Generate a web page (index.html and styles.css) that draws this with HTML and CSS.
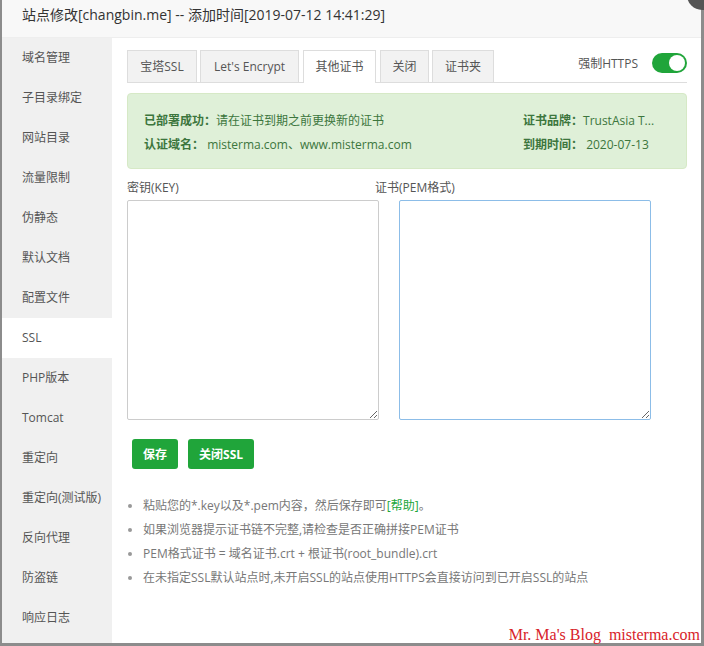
FILE: index.html
```html
<!DOCTYPE html>
<html>
<head>
<meta charset="utf-8">
<link rel="stylesheet" href="styles.css">
</head>
<body>
<div class="frame">
  <div class="dialog">
    <div class="title">站点修改[changbin.me] -- 添加时间[2019-07-12 14:41:29]</div>
    <span class="close"></span>
    <div class="body">
      <ul class="side">
        <li>域名管理</li>
        <li>子目录绑定</li>
        <li>网站目录</li>
        <li>流量限制</li>
        <li>伪静态</li>
        <li>默认文档</li>
        <li>配置文件</li>
        <li class="on">SSL</li>
        <li>PHP版本</li>
        <li>Tomcat</li>
        <li>重定向</li>
        <li>重定向(测试版)</li>
        <li>反向代理</li>
        <li>防盗链</li>
        <li>响应日志</li>
      </ul>
      <div class="main">
        <div class="tabbar">
          <span class="tab t1">宝塔SSL</span>
          <span class="tab t2">Let's Encrypt</span>
          <span class="tab t3 active">其他证书</span>
          <span class="tab t4">关闭</span>
          <span class="tab t5">证书夹</span>
          <div class="force">
            <span>强制HTTPS</span>
            <span class="switch"><span class="knob"></span></span>
          </div>
        </div>
        <div class="alert">
          <div class="col left">
            <p><b>已部署成功：</b>请在证书到期之前更换新的证书</p>
            <p><b>认证域名：</b> misterma.com、www.misterma.com</p>
          </div>
          <div class="col right">
            <p><b>证书品牌：</b>TrustAsia T...</p>
            <p><b>到期时间：</b> 2020-07-13</p>
          </div>
        </div>
        <div class="fields">
          <div class="field f1">
            <label>密钥(KEY)</label>
            <textarea></textarea>
          </div>
          <div class="field f2">
            <label>证书(PEM格式)</label>
            <textarea class="focus"></textarea>
          </div>
        </div>
        <div class="btns">
          <button class="btn">保存</button>
          <button class="btn">关闭SSL</button>
        </div>
        <ul class="tips">
          <li>粘贴您的*.key以及*.pem内容，然后保存即可<a>[帮助]</a>。</li>
          <li>如果浏览器提示证书链不完整,请检查是否正确拼接PEM证书</li>
          <li>PEM格式证书 = 域名证书.crt + 根证书(root_bundle).crt</li>
          <li>在未指定SSL默认站点时,未开启SSL的站点使用HTTPS会直接访问到已开启SSL的站点</li>
        </ul>
      </div>
    </div>
  </div>
  <div class="watermark">Mr. Ma's Blog&nbsp; misterma.com</div>
</div>
</body>
</html>
```

FILE: styles.css
```css
* { box-sizing: border-box; }
html, body { margin: 0; padding: 0; }
body {
  font-family: "Open Sans", "Noto Sans CJK SC", sans-serif;
  font-size: 12px;
  color: #555;
}
.frame {
  position: relative;
  width: 704px;
  height: 646px;
  background: #8c8c8c;
  padding: 0 3px 3px 2px;
  overflow: hidden;
}
.dialog {
  position: relative;
  width: 699px;
  height: 643px;
  background: #fff;
  display: flex;
  flex-direction: column;
}
.title {
  height: 38px;
  line-height: 30px;
  padding-left: 20px;
  font-size: 14px;
  color: #333;
  background: #f8f8f8;
  border-bottom: 1px solid #eee;
}
.close {
  position: absolute;
  right: -16px;
  top: -20px;
  width: 30px;
  height: 30px;
  border-radius: 50%;
  background: #555;
}
.body {
  flex: 1;
  display: flex;
  min-height: 0;
}
.side {
  list-style: none;
  margin: 0;
  padding: 0;
  width: 110px;
  background: #f0f0f0;
}
.side li {
  height: 40px;
  line-height: 40px;
  padding-left: 20px;
  color: #555;
}
.side li.on { background: #fff; }
.main {
  flex: 1;
  padding: 13px 14px 0 15px;
}
.tabbar {
  display: flex;
  align-items: flex-end;
  height: 32px;
  border-bottom: 1px solid #ddd;
}
.tab {
  height: 32px;
  line-height: 31px;
  text-align: center;
  background: #f2f2f2;
  border: 1px solid #ddd;
  border-bottom: none;
  color: #555;
  margin-right: 3px;
}
.tab.t1 { width: 70px; }
.tab.t2 { width: 99px; margin-right: 4px; }
.tab.t3 { width: 73px; margin-right: 4px; }
.tab.t4 { width: 49px; }
.tab.t5 { width: 62px; }
.tab.active {
  background: #fff;
  height: 33px;
  margin-bottom: -1px;
}
.force {
  margin-left: auto;
  align-self: center;
  display: flex;
  align-items: center;
  gap: 14px;
  margin-top: -8px;
  color: #555;
}
.switch {
  position: relative;
  width: 35px;
  height: 20px;
  border-radius: 10px;
  background: #20a53a;
}
.knob {
  position: absolute;
  right: 2px;
  top: 2px;
  width: 16px;
  height: 16px;
  border-radius: 50%;
  background: #fff;
}
.alert {
  margin-top: 10px;
  height: 76px;
  background: #dff0d8;
  border: 1px solid #d6e9c6;
  border-radius: 4px;
  color: #3c763d;
  display: flex;
  padding: 15px 10px 0 16px;
}
.alert p { margin: 0; line-height: 24px; }
.alert b { font-weight: bold; }
.alert .left { width: 379px; }
.fields {
  display: flex;
  gap: 20px;
  margin-top: 9px;
}
.field { display: flex; flex-direction: column; width: 252px; }
.field label { line-height: 20px; height: 22px; color: #555; }
.f2 label { margin-left: -24px; }
textarea {
  width: 252px;
  height: 220px;
  border: 1px solid #ccc;
  border-radius: 2px;
  resize: both;
  font: inherit;
}
textarea.focus { border-color: #8cbde8; }
.btns {
  display: flex;
  gap: 10px;
  margin: 19px 0 0 5px;
}
.btn {
  height: 30px;
  padding: 0 11px;
  border: none;
  border-radius: 3px;
  background: #20a53a;
  color: #fff;
  font-family: inherit;
  font-size: 12px;
  font-weight: bold;
}
.tips {
  list-style: none;
  margin: 25px 0 0;
  padding: 0;
  color: #777;
}
.tips li {
  position: relative;
  line-height: 24px;
  padding-left: 16px;
}
.tips li::before {
  content: "";
  position: absolute;
  left: 1px;
  top: 10px;
  width: 4px;
  height: 4px;
  border-radius: 50%;
  background: #999;
}
.tips a { color: #20a53a; }
.watermark {
  position: absolute;
  right: 4px;
  bottom: 2px;
  font-family: "Liberation Serif", serif;
  font-size: 16px;
  color: #d8232a;
}
```
